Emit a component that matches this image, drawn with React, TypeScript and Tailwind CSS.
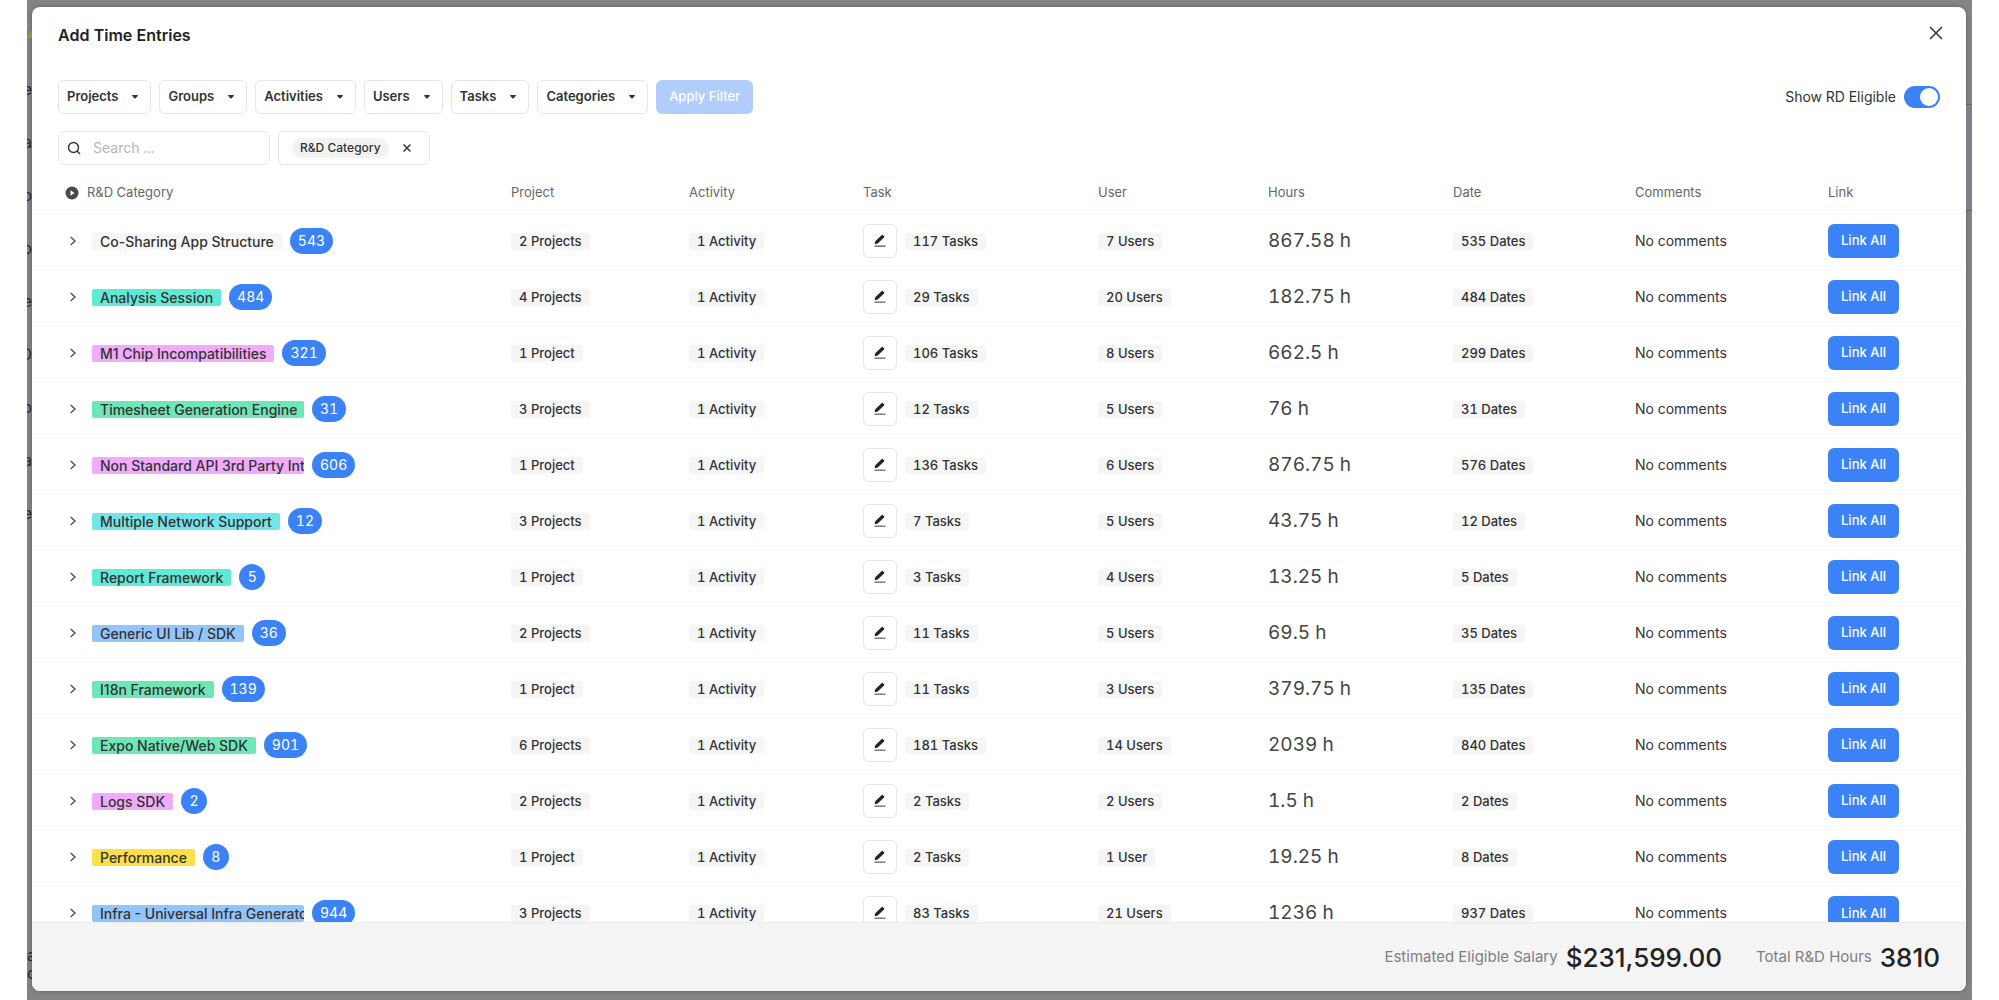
import { useState } from "react";
import clsx from "clsx";

interface Entry {
  category: string;
  count: number;
  tag: string;
  projects: string;
  tasks: string;
  users: string;
  hours: string;
  dates: string;
}

const ENTRIES: Entry[] = [
  { category: "Co-Sharing App Structure", count: 543, tag: "bg-[#f6f6f6]", projects: "2 Projects", tasks: "117 Tasks", users: "7 Users", hours: "867.58 h", dates: "535 Dates" },
  { category: "Analysis Session", count: 484, tag: "bg-[#5eead4]", projects: "4 Projects", tasks: "29 Tasks", users: "20 Users", hours: "182.75 h", dates: "484 Dates" },
  { category: "M1 Chip Incompatibilities", count: 321, tag: "bg-[#f0abfc]", projects: "1 Project", tasks: "106 Tasks", users: "8 Users", hours: "662.5 h", dates: "299 Dates" },
  { category: "Timesheet Generation Engine", count: 31, tag: "bg-[#6ee7b7]", projects: "3 Projects", tasks: "12 Tasks", users: "5 Users", hours: "76 h", dates: "31 Dates" },
  { category: "Non Standard API 3rd Party Int", count: 606, tag: "bg-[#f0abfc]", projects: "1 Project", tasks: "136 Tasks", users: "6 Users", hours: "876.75 h", dates: "576 Dates" },
  { category: "Multiple Network Support", count: 12, tag: "bg-[#72e5ea]", projects: "3 Projects", tasks: "7 Tasks", users: "5 Users", hours: "43.75 h", dates: "12 Dates" },
  { category: "Report Framework", count: 5, tag: "bg-[#5eead4]", projects: "1 Project", tasks: "3 Tasks", users: "4 Users", hours: "13.25 h", dates: "5 Dates" },
  { category: "Generic UI Lib / SDK", count: 36, tag: "bg-[#93c5fd]", projects: "2 Projects", tasks: "11 Tasks", users: "5 Users", hours: "69.5 h", dates: "35 Dates" },
  { category: "I18n Framework", count: 139, tag: "bg-[#6ee7b7]", projects: "1 Project", tasks: "11 Tasks", users: "3 Users", hours: "379.75 h", dates: "135 Dates" },
  { category: "Expo Native/Web SDK", count: 901, tag: "bg-[#6ee7b7]", projects: "6 Projects", tasks: "181 Tasks", users: "14 Users", hours: "2039 h", dates: "840 Dates" },
  { category: "Logs SDK", count: 2, tag: "bg-[#f0abfc]", projects: "2 Projects", tasks: "2 Tasks", users: "2 Users", hours: "1.5 h", dates: "2 Dates" },
  { category: "Performance", count: 8, tag: "bg-[#fde047]", projects: "1 Project", tasks: "2 Tasks", users: "1 User", hours: "19.25 h", dates: "8 Dates" },
  { category: "Infra - Universal Infra Generato", count: 944, tag: "bg-[#93c5fd]", projects: "3 Projects", tasks: "83 Tasks", users: "21 Users", hours: "1236 h", dates: "937 Dates" },
];

const FILTERS = ["Projects", "Groups", "Activities", "Users", "Tasks", "Categories"];

const EDGE_LETTERS = ["e", "a", "o", "o", "e", "D", "o", "a", "e"];

function Pill({ children }: { children: string }) {
  return (
    <span className="block w-fit rounded-xs bg-[#f5f5f5] px-2 text-[13px] leading-[17px] font-medium">
      {children}
    </span>
  );
}

function Cross({ className }: { className: string }) {
  return (
    <svg viewBox="0 0 14 14" fill="none" stroke="currentColor" className={className}>
      <path d="M1 1l12 12M13 1L1 13" />
    </svg>
  );
}

function PencilIcon() {
  return (
    <svg viewBox="0 0 14 14" fill="currentColor" className="h-3.5 w-3.5">
      <path d="M1.600 10.200l.7-3 6.300-6c.4-.4 1-.4 1.400 0l1 1c.4.4.4 1 0 1.400L4.700 9.600z" />
      <path d="M1.500 11.600h11v1.100H1.500z" opacity="0.8" />
    </svg>
  );
}

function EntryRow({ entry }: { entry: Entry }) {
  return (
    <tr className="h-14 border-t border-[#f7f7f7]">
      <td className="pl-[38px]">
        <div className="flex items-center">
          <button type="button" aria-label={entry.category} className="mr-4 text-[#555]">
            <svg viewBox="0 0 6 10" fill="none" stroke="currentColor" strokeWidth="1.500" className="h-2.5 w-1.5">
              <path d="M0.700 1l4.300 4-4.300 4" />
            </svg>
          </button>
          <span
            className={clsx(
              "max-w-[212px] overflow-hidden rounded-xs px-2 text-sm leading-[17px] font-medium whitespace-nowrap proportional-nums",
              entry.tag
            )}
          >
            {entry.category}
          </span>
          <span className="ml-2 min-w-[26px] rounded-full bg-[#3b82f6] px-2 text-center text-sm leading-[26px] text-white">
            {entry.count}
          </span>
        </div>
      </td>
      <td>
        <Pill>{entry.projects}</Pill>
      </td>
      <td>
        <Pill>1 Activity</Pill>
      </td>
      <td>
        <div className="flex items-center gap-2">
          <button
            type="button"
            aria-label="Task"
            className="flex h-[34px] w-[34px] items-center justify-center rounded-md border border-[#e5e5e5] bg-white text-[#222]"
          >
            <PencilIcon />
          </button>
          <Pill>{entry.tasks}</Pill>
        </div>
      </td>
      <td>
        <Pill>{entry.users}</Pill>
      </td>
      <td className="text-[19px] text-[#444]">{entry.hours}</td>
      <td>
        <Pill>{entry.dates}</Pill>
      </td>
      <td className="text-sm">No comments</td>
      <td>
        <button type="button" className="h-[34px] rounded-md bg-[#3b82f6] px-[13px] text-[13px] font-medium text-white">
          Link All
        </button>
      </td>
    </tr>
  );
}

// Strips of the page that stay visible on both sides of the dialog
function LeftEdge() {
  return (
    <div aria-hidden="true" className="flex w-[5px] flex-col overflow-hidden text-base text-[#2c2c2c]">
      <svg viewBox="0 0 5 10" className="mt-7 mb-6 h-2.5 w-[5px] shrink-0">
        <path d="M1 10l4-9v9z" fill="#b9a41c" />
      </svg>
      {EDGE_LETTERS.map((letter, i) => (
        <span key={i} className="flex h-[53px] shrink-0 items-center justify-end">
          {letter}
        </span>
      ))}
      <span className="mt-auto leading-[18px]">a</span>
      <span className="mb-[18px] leading-[18px]">d</span>
    </div>
  );
}

function RightEdge() {
  return (
    <div aria-hidden="true" className="w-[6px] pt-[104px]">
      <div className="h-[107px] border-y border-[#5f6368] bg-[#7d8287]" />
    </div>
  );
}

export default function App() {
  const [eligible, setEligible] = useState(true);
  const [search, setSearch] = useState("");

  return (
    <div className="flex h-screen bg-white px-[27px] font-['Inter',sans-serif] text-[#333] tabular-nums">
      <div className="flex min-w-0 flex-1 bg-[#848484]">
        <LeftEdge />
        <div
          role="dialog"
          aria-labelledby="dialog-title"
          className="mt-[7px] mb-[9px] flex min-w-0 flex-1 flex-col overflow-hidden rounded-lg bg-white shadow-[0_0_4px_rgba(0,0,0,0.3)]"
        >
          {/* Title */}
          <header className="flex items-start justify-between pt-4 pr-[23px] pl-[26px]">
            <h1 id="dialog-title" className="text-base leading-6 font-semibold text-[#222]">
              Add Time Entries
            </h1>
            <button type="button" aria-label="Close" className="flex h-5 items-center">
              <Cross className="h-3.5 w-3.5 stroke-[1.5]" />
            </button>
          </header>

          {/* Filters */}
          <div className="mt-[33px] flex items-center gap-2 px-[26px]">
            {FILTERS.map((label) => (
              <button
                key={label}
                type="button"
                className="flex h-[34px] items-center gap-[14px] rounded-md border border-[#e5e5e5] pr-3 pl-2 text-[13px] font-semibold"
              >
                {label}
                <svg viewBox="0 0 6 4" fill="currentColor" className="h-1 w-1.5">
                  <path d="M0.500 0h5L6 .8 3.400 3.600h-.8L0 .8z" />
                </svg>
              </button>
            ))}
            <button
              type="button"
              disabled
              className="h-[34px] rounded-md bg-[#b1cdfb] px-[13px] text-[13px] font-medium text-white"
            >
              Apply Filter
            </button>
            <label className="ml-auto flex items-center gap-2 text-sm">
              Show RD Eligible
              <input
                type="checkbox"
                role="switch"
                checked={eligible}
                onChange={(e) => setEligible(e.target.checked)}
                className="h-[22px] w-9 appearance-none rounded-full bg-gray-300 p-0.5 before:block before:h-[18px] before:w-[18px] before:rounded-full before:bg-white checked:bg-[#3b82f6] checked:before:ml-auto"
              />
            </label>
          </div>

          {/* Search and grouping */}
          <div className="mt-[17px] flex items-center gap-2 px-[26px]">
            <label className="flex h-[34px] w-[212px] items-center gap-3 rounded-md border border-[#e5e5e5] pl-2">
              <svg viewBox="0 0 14 14" fill="none" stroke="currentColor" strokeWidth="1.400" className="h-3.5 w-3.5 shrink-0">
                <circle cx="6.500" cy="6.500" r="5" />
                <path d="M10 10l3 3" />
              </svg>
              <input
                type="text"
                aria-label="Search"
                placeholder="Search ..."
                value={search}
                onChange={(e) => setSearch(e.target.value)}
                className="w-full min-w-0 bg-transparent text-sm outline-none placeholder:text-[#b5b5b5]"
              />
            </label>
            <div className="flex h-[34px] items-center gap-[14px] rounded-md border border-[#e5e5e5] pr-[18px] pl-[13px]">
              <span className="rounded-full bg-[#f2f2f2] px-2 text-xs leading-5 font-medium">R&amp;D Category</span>
              <button type="button" aria-label="Remove">
                <Cross className="h-2 w-2 stroke-[2.5]" />
              </button>
            </div>
          </div>

          {/* Entries */}
          <div className="min-h-0 flex-1 overflow-hidden">
            <table className="w-full table-fixed border-collapse text-left">
              <colgroup>
                <col className="w-[479px]" />
                <col className="w-[178px]" />
                <col className="w-[174px]" />
                <col className="w-[235px]" />
                <col className="w-[170px]" />
                <col className="w-[185px]" />
                <col className="w-[182px]" />
                <col className="w-[193px]" />
                <col className="w-[138px]" />
              </colgroup>
              <thead>
                <tr className="h-12 text-[13px] text-[#666] [&>th]:pt-2 [&>th]:font-normal">
                  <th className="pl-[33px]">
                    <span className="flex items-center gap-2">
                      <svg viewBox="0 0 14 14" className="h-3.5 w-3.5">
                        <circle cx="7" cy="7" r="6.500" fill="#4a4a4a" />
                        <path d="M5.500 4.300L9.500 7l-4 2.700z" fill="#fff" />
                      </svg>
                      R&amp;D Category
                    </span>
                  </th>
                  <th>Project</th>
                  <th>Activity</th>
                  <th>Task</th>
                  <th>User</th>
                  <th>Hours</th>
                  <th>Date</th>
                  <th>Comments</th>
                  <th>Link</th>
                </tr>
              </thead>
              <tbody>
                {ENTRIES.map((entry) => (
                  <EntryRow key={entry.category} entry={entry} />
                ))}
              </tbody>
            </table>
          </div>

          {/* Totals */}
          <footer className="flex h-[69px] shrink-0 items-center justify-end gap-[34px] border-t border-[#ececec] bg-[#f4f4f4] px-[26px] text-[15px] text-[#808080] proportional-nums">
            <div className="flex items-center gap-2">
              Estimated Eligible Salary
              <strong className="text-[26px] font-medium text-[#222]">$231,599.00</strong>
            </div>
            <div className="flex items-center gap-2">
              Total R&amp;D Hours
              <strong className="text-[26px] font-medium text-[#222]">3810</strong>
            </div>
          </footer>
        </div>
        <RightEdge />
      </div>
    </div>
  );
}
